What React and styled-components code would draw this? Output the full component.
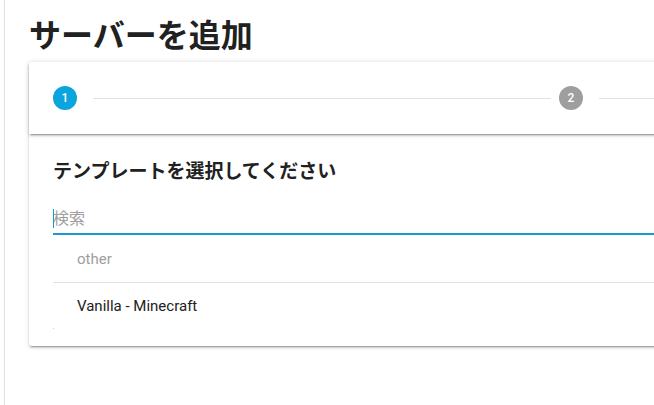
import React from "react";
import styled, { createGlobalStyle } from "styled-components";

const Global = createGlobalStyle`
  html, body { margin: 0; padding: 0; background: #fff; overflow: hidden; }
  body { font-family: Roboto, "Noto Sans CJK JP", sans-serif; color: rgba(0,0,0,0.87); }
  * { box-sizing: border-box; }
`;

const Layout = styled.div`
  display: flex;
  min-height: 405px;
  width: 1200px;
`;

const Rail = styled.div`
  width: 5px;
  flex: none;
  border-right: 1px solid #e0e0e0;
`;

const Main = styled.main`
  padding: 16px 24px 24px 24px;
`;

const Title = styled.h1`
  margin: 0 0 6px 0;
  font-size: 32px;
  line-height: 40px;
  font-weight: 700;
  color: #212121;
`;

const Card = styled.section`
  width: 1060px;
  background: #fff;
  border-radius: 3px;
  box-shadow: 0 3px 1px -2px rgba(0,0,0,.2), 0 2px 2px 0 rgba(0,0,0,.14), 0 1px 5px 0 rgba(0,0,0,.12);
`;

const StepHeader = styled.div`
  height: 72px;
  display: flex;
  align-items: center;
  padding: 0 24px;
  box-shadow: 0 3px 1px -2px rgba(0,0,0,.2), 0 2px 2px 0 rgba(0,0,0,.14), 0 1px 5px 0 rgba(0,0,0,.12);
  position: relative;
`;

const StepCircle = styled.span`
  width: 24px;
  height: 24px;
  flex: none;
  border-radius: 50%;
  background: ${p => (p.$active ? "#0aa5de" : "#9e9e9e")};
  color: #fff;
  font-size: 12px;
  font-weight: 500;
  display: flex;
  align-items: center;
  justify-content: center;
`;

const StepLine = styled.span`
  flex: 1 1 0;
  height: 1px;
  background: #e0e0e0;
  margin: 0 8px 0 16px;
`;

const Content = styled.div`
  padding: 24px 24px 17px 24px;
`;

const Heading = styled.h3`
  margin: 0;
  font-size: 19px;
  line-height: 28px;
  font-weight: 700;
  color: #212121;
`;

const Field = styled.div`
  position: relative;
  margin-top: 20px;
  border-bottom: 2px solid #1a9bcf;
  padding-bottom: 3px;
`;

const SearchInput = styled.input`
  display: block;
  width: 100%;
  height: 24px;
  border: none;
  outline: none;
  padding: 0;
  font-family: Roboto, "Noto Sans CJK JP", sans-serif;
  font-size: 16px;
  color: rgba(0,0,0,0.87);
  caret-color: transparent;
  &::placeholder { color: #9e9e9e; }
`;

const Caret = styled.span`
  position: absolute;
  left: 0;
  top: 3px;
  width: 1px;
  height: 19px;
  background: #1a9bcf;
`;

const List = styled.ul`
  list-style: none;
  margin: 0;
  padding: 0;
`;

const Subheader = styled.li`
  height: 48px;
  display: flex;
  align-items: center;
  padding: 0 24px;
  font-size: 15px;
  color: #9e9e9e;
  border-bottom: 1px solid #e0e0e0;
`;

const Item = styled.li`
  height: 45px;
  display: flex;
  align-items: center;
  padding: 0 24px;
  font-size: 15px;
  color: #212121;
`;

const Dot = styled.li`
  width: 1px;
  height: 1px;
  background: #ccc;
`;

export default function App() {
  return (
    <>
      <Global />
      <Layout>
        <Rail />
        <Main>
          <Title>サーバーを追加</Title>
          <Card>
            <StepHeader>
              <StepCircle $active>1</StepCircle>
              <StepLine />
              <StepCircle>2</StepCircle>
              <StepLine />
            </StepHeader>
            <Content>
              <Heading>テンプレートを選択してください</Heading>
              <Field>
                <SearchInput placeholder="検索" />
                <Caret />
              </Field>
              <List>
                <Subheader>other</Subheader>
                <Item>Vanilla - Minecraft</Item>
                <Dot />
              </List>
            </Content>
          </Card>
        </Main>
      </Layout>
    </>
  );
}
